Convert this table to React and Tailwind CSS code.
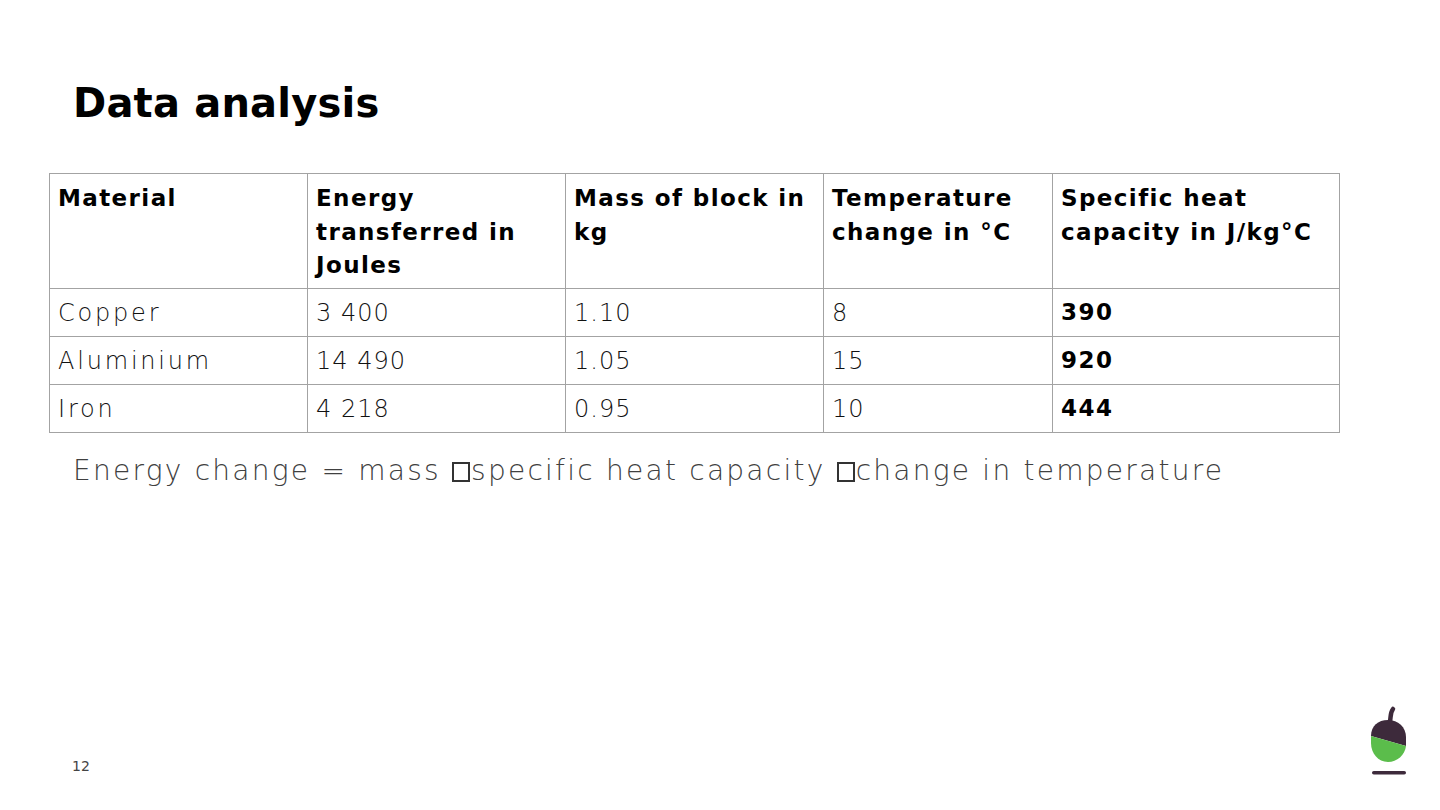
const rows = [
  { name: 'Copper', energy: '3 400', mass: '1.10', temp: '8', shc: '390' },
  { name: 'Aluminium', energy: '14 490', mass: '1.05', temp: '15', shc: '920' },
  { name: 'Iron', energy: '4 218', mass: '0.95', temp: '10', shc: '444' },
];

const headers = [
  'Material',
  'Energy transferred in Joules',
  'Mass of block in kg',
  'Temperature change in °C',
  'Specific heat capacity in J/kg°C',
];

const widths = ['w-[258px]', 'w-[258px]', 'w-[258px]', 'w-[229px]', 'w-[287px]'];

function Missing() {
  return <span className="inline-block w-[18px] h-[20px] border-[2.5px] border-[#333] align-[-2px] mr-[1px]" />;
}

function Acorn() {
  return (
    <svg width="50" height="73" viewBox="0 0 50 73">
      <path d="M25 16 C26 12 25 8 28 4" stroke="#3d2a3b" strokeWidth="4.5" strokeLinecap="round" fill="none" />
      <path d="M6 31 C6 21 13 15 23 15 C33 15 41 22 41 32 L41 41 Z" fill="#3d2a3b" />
      <path d="M6 31 L41 41 C40 50 32 57 23 57 C13 57 6 48 6 38 Z" fill="#5bbd4b" />
      <rect x="7" y="66" width="34" height="3.5" rx="1.75" fill="#3d2a3b" />
    </svg>
  );
}

export default function App() {
  return (
    <div className="w-[1440px] h-[810px] bg-white relative overflow-hidden font-['DejaVu_Sans',sans-serif] text-black">
      <div className="pt-[78px] pl-[73px]">
        <h1 className="text-[40px] leading-[50px] font-bold tracking-[0.2px]">Data analysis</h1>
      </div>

      <table className="ml-[49px] mt-[45px] border-collapse table-fixed">
        <thead>
          <tr>
            {headers.map((h, i) => (
              <th
                key={h}
                className={`${widths[i]} h-[115px] border border-[#a3a3a3] align-top text-left font-bold text-[23px] leading-[33.5px] pl-[8px] pr-[4px] pt-[8px] tracking-[1.4px]`}
              >
                {h}
              </th>
            ))}
          </tr>
        </thead>
        <tbody>
          {rows.map(r => (
            <tr key={r.name} className="h-[48px]">
              <td className="border border-[#a3a3a3] pl-[8px] text-[24px] font-light text-[#111] tracking-[2.8px]">{r.name}</td>
              {[r.energy, r.mass, r.temp].map((v, i) => (
                <td key={i} className="border border-[#a3a3a3] pl-[8px] text-[24px] font-light text-[#111] tracking-[1px]">{v}</td>
              ))}
              <td className="border border-[#a3a3a3] pl-[8px] text-[23px] font-bold tracking-[1.5px]">{r.shc}</td>
            </tr>
          ))}
        </tbody>
      </table>

      <p className="ml-[73px] mt-[18px] text-[28px] leading-[40px] font-light text-[#404040] tracking-[2.25px]">
        Energy change = mass <Missing />specific heat capacity <Missing />change in temperature
      </p>

      <div className="absolute left-[72px] top-[756px] text-[14px] text-[#444]">12</div>

      <div className="absolute left-[1365px] top-[705px]">
        <Acorn />
      </div>
    </div>
  );
}
